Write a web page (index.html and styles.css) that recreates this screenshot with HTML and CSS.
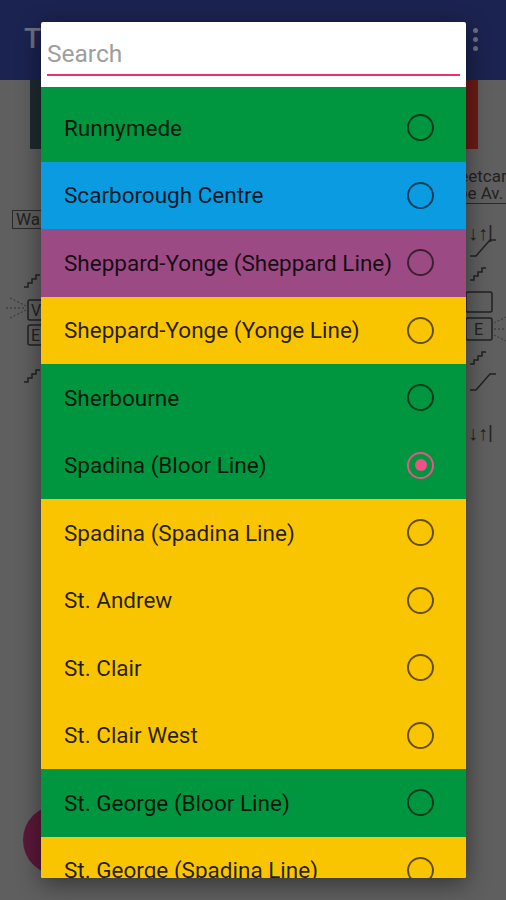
FILE: index.html
```html
<!DOCTYPE html>
<html lang="en">

<head>
    <meta charset="UTF-8" />
    <title>Station picker</title>
    <link rel="stylesheet" href="styles.css">
</head>

<body>
    <header class="appbar">
        <span class="appbar-title">TTC Stations</span>
        <span class="appbar-menu"><i></i><i></i><i></i></span>
    </header>

    <main class="map">
        <div class="map-band">
            <div class="band-left"></div>
            <div class="band-right"></div>
        </div>
        <!-- map drawing behind the dialog -->
        <span class="legend legend-left">Walk</span>
        <span class="legend legend-right">Streetcar<br>Pape Av.</span>
        <svg class="map-art" width="506" height="520" viewBox="0 0 506 520">
            <g fill="none" stroke="#222" stroke-width="1.5">
                <path d="M24 147 l4 0 l0 -4 l4 0 l0 -4 l4 0 l0 -4 l4 0" />
                <path d="M24 242 l4 0 l0 -4 l4 0 l0 -4 l4 0 l0 -4 l4 0" />
                <rect x="28" y="160" width="16" height="20" rx="2" />
                <rect x="28" y="185" width="16" height="20" rx="2" />
                <path d="M470 116 l6 0 l14 -16 l6 0" />
                <path d="M470 140 l4 0 l0 -4 l4 0 l0 -4 l4 0 l0 -4 l4 0" />
                <rect x="466" y="152" width="26" height="20" rx="2" />
                <rect x="466" y="178" width="26" height="22" rx="2" />
                <path d="M470 224 l4 0 l0 -4 l4 0 l0 -4 l4 0 l0 -4 l4 0" />
                <path d="M470 250 l6 0 l14 -16 l6 0" />
            </g>
            <g fill="none" stroke="#333" stroke-width="1" stroke-dasharray="2 2">
                <path d="M10 158 l16 8 M6 168 l20 0 M10 178 l16 -8" />
                <path d="M494 183 l12 -6 M494 189 l12 0 M494 195 l12 6" />
            </g>
            <g font-family="Roboto, sans-serif" font-size="16" fill="#222">
                <text x="31" y="176">V</text>
                <text x="31" y="201">E</text>
                <text x="474" y="195">E</text>
            </g>
            <g font-family="Roboto, sans-serif" font-size="20" fill="#222">
                <text x="468" y="100">↓↑|</text>
                <text x="468" y="300">↓↑|</text>
            </g>
        </svg>
        <span class="fab"></span>
    </main>

    <div class="dialog">
        <div class="dialog-search">
            <input class="search-input" type="text" placeholder="Search" />
        </div>
        <ul class="station-list">
            <li class="station line-green first">Runnymede<span class="radio"></span></li>
            <li class="station line-blue">Scarborough Centre<span class="radio"></span></li>
            <li class="station line-purple">Sheppard-Yonge (Sheppard Line)<span class="radio"></span></li>
            <li class="station line-yellow">Sheppard-Yonge (Yonge Line)<span class="radio"></span></li>
            <li class="station line-green">Sherbourne<span class="radio"></span></li>
            <li class="station line-green">Spadina (Bloor Line)<span class="radio checked"></span></li>
            <li class="station line-yellow">Spadina (Spadina Line)<span class="radio"></span></li>
            <li class="station line-yellow">St. Andrew<span class="radio"></span></li>
            <li class="station line-yellow">St. Clair<span class="radio"></span></li>
            <li class="station line-yellow">St. Clair West<span class="radio"></span></li>
            <li class="station line-green">St. George (Bloor Line)<span class="radio"></span></li>
            <li class="station line-yellow">St. George (Spadina Line)<span class="radio"></span></li>
        </ul>
    </div>
</body>

</html>
```

FILE: styles.css
```css
* {
    margin: 0;
    padding: 0;
    box-sizing: border-box;
}

body {
    width: 506px;
    height: 900px;
    overflow: hidden;
    background: #5f5f5f;
    font-family: Roboto, "Noto Sans", sans-serif;
    position: relative;
}

.appbar {
    height: 80px;
    background: #1b2350;
    display: flex;
    align-items: center;
    justify-content: space-between;
    padding: 0 24px 0 24px;
}

.appbar-title {
    color: #6b7086;
    font-size: 28px;
    font-weight: 500;
    margin-top: -4px;
}

.appbar-menu {
    display: flex;
    flex-direction: column;
    gap: 4px;
    margin-right: 4px;
    margin-top: -2px;
}

.appbar-menu i {
    display: block;
    width: 5px;
    height: 5px;
    border-radius: 50%;
    background: #6b7086;
}

.map {
    position: relative;
    height: 820px;
}

.map-band {
    display: flex;
    height: 69px;
    margin: 0 28px 0 30px;
}

.band-left {
    flex: 1;
    background: #1e2a30;
}

.band-right {
    flex: 1;
    background: #6a1b14;
}

.legend {
    position: absolute;
    font-size: 17px;
    color: #222;
    border: 1.5px solid #2a2a2a;
    padding: 0 3px;
    line-height: 17px;
}

.legend-left {
    left: 12px;
    top: 130px;
}

.legend-right {
    left: 434px;
    top: 88px;
    border-right: none;
    border-top: none;
    padding-bottom: 1px;
}

.map-art {
    position: absolute;
    left: 0;
    top: 60px;
}

.fab {
    position: absolute;
    left: 23px;
    top: 725px;
    width: 70px;
    height: 70px;
    border-radius: 50%;
    background: #5a1838;
}

.dialog {
    position: absolute;
    left: 41px;
    top: 22px;
    width: 425px;
    height: 856px;
    overflow: hidden;
    background: #fff;
    border-radius: 2px;
    box-shadow: 0 6px 24px rgba(0, 0, 0, 0.45);
}

.dialog-search {
    height: 65px;
    padding: 17px 6px 0 6px;
}

.search-input {
    display: block;
    width: 100%;
    border: none;
    border-bottom: 2px solid #ef2f6f;
    outline: none;
    font-family: Roboto, sans-serif;
    font-size: 24.5px;
    padding: 0 0 6px 0;
    color: #222;
    background: transparent;
}

.search-input::placeholder {
    color: #9e9e9e;
}

.station-list {
    list-style: none;
}

.station {
    height: 67.5px;
    display: flex;
    align-items: center;
    justify-content: space-between;
    padding: 0 32px 0 23px;
    font-size: 22.5px;
    color: rgba(0, 0, 0, 0.85);
    white-space: nowrap;
}

.station.first {
    height: 74.5px;
    padding-top: 7px;
}

.line-green {
    background: #00963f;
}

.line-blue {
    background: #0a9be0;
}

.line-purple {
    background: #9b4a84;
}

.line-yellow {
    background: #f9c500;
}

.radio {
    width: 27px;
    height: 27px;
    border-radius: 50%;
    border: 2px solid rgba(0, 0, 0, 0.6);
    flex-shrink: 0;
    position: relative;
}

.radio.checked {
    border-color: #f0508a;
}

.radio.checked::after {
    content: "";
    position: absolute;
    left: 5.5px;
    top: 5.5px;
    width: 12px;
    height: 12px;
    border-radius: 50%;
    background: #f0508a;
}
```
